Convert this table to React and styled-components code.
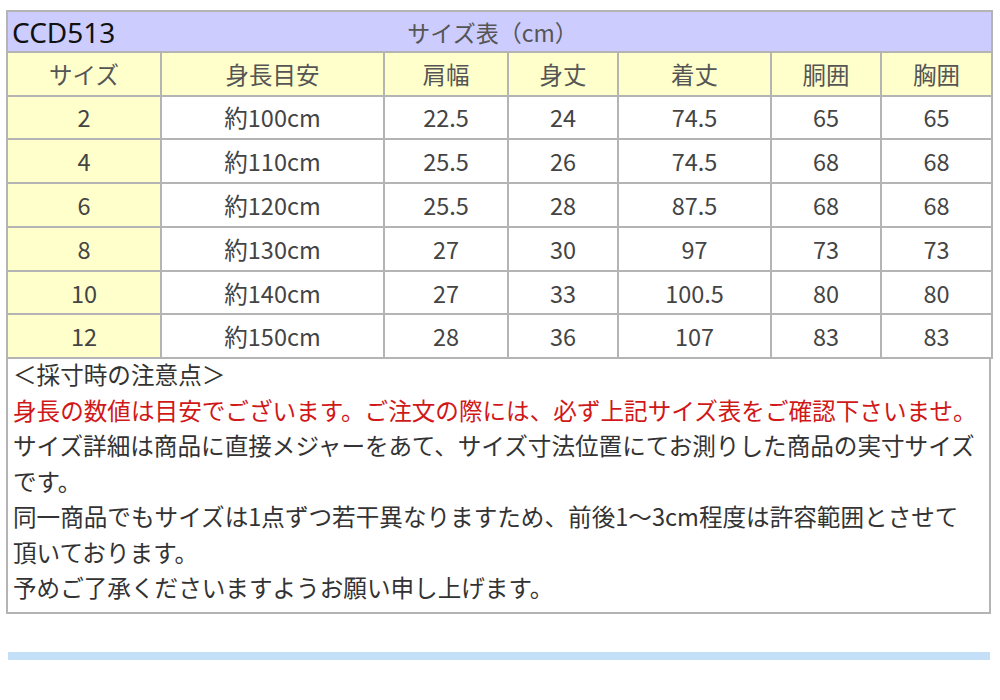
import React from 'react';
import styled, { createGlobalStyle } from 'styled-components';

const GlobalStyle = createGlobalStyle`
  body {
    margin: 0;
    background: #ffffff;
    font-family: 'Noto Sans CJK JP', 'Noto Sans', sans-serif;
  }
`;

const columns = [154, 223, 124, 110, 153, 110, 111];
const headers = ['サイズ', '身長目安', '肩幅', '身丈', '着丈', '胴囲', '胸囲'];
const rows = [
  ['2', '約100cm', '22.5', '24', '74.5', '65', '65'],
  ['4', '約110cm', '25.5', '26', '74.5', '68', '68'],
  ['6', '約120cm', '25.5', '28', '87.5', '68', '68'],
  ['8', '約130cm', '27', '30', '97', '73', '73'],
  ['10', '約140cm', '27', '33', '100.5', '80', '80'],
  ['12', '約150cm', '28', '36', '107', '83', '83'],
];

function App() {
  return (
    <Page>
      <GlobalStyle />
      <SizeTable>
        <colgroup>
          {columns.map((w, i) => <col key={i} style={{ width: w }} />)}
        </colgroup>
        <thead>
          <tr>
            <TitleCell colSpan={7}>
              <TitleBar>
                <Code>CCD513</Code>
                <Caption>サイズ表（cm）</Caption>
                <span />
              </TitleBar>
            </TitleCell>
          </tr>
          <tr>
            {headers.map((h) => <Head key={h}>{h}</Head>)}
          </tr>
        </thead>
        <tbody>
          {rows.map((r) => (
            <tr key={r[0]}>
              {r.map((v, i) => <Cell key={i} $first={i === 0}>{v}</Cell>)}
            </tr>
          ))}
        </tbody>
      </SizeTable>
      <Notes>
        <Line>＜採寸時の注意点＞</Line>
        <Line $red>身長の数値は目安でございます。ご注文の際には、必ず上記サイズ表をご確認下さいませ。</Line>
        <Line>サイズ詳細は商品に直接メジャーをあて、サイズ寸法位置にてお測りした商品の実寸サイズ</Line>
        <Line>です。</Line>
        <Line>同一商品でもサイズは1点ずつ若干異なりますため、前後1～3cm程度は許容範囲とさせて</Line>
        <Line>頂いております。</Line>
        <Line>予めご了承くださいますようお願い申し上げます。</Line>
      </Notes>
      <NextBar />
    </Page>
  );
}

export default App;

const Page = styled.div`
  padding: 10px 0 0 6px;
  width: 985px;
`;

const SizeTable = styled.table`
  width: 985px;
  table-layout: fixed;
  border-collapse: collapse;
  color: #444;
  font-size: 23.5px;
`;

const TitleCell = styled.th`
  background: #ccccff;
  border: 2px solid #b4b4b4;
  height: 39px;
  padding: 0 4px;
  font-weight: normal;
`;

const TitleBar = styled.div`
  display: grid;
  grid-template-columns: 1fr auto 1fr;
  align-items: center;
`;

const Code = styled.span`
  text-align: left;
  font-size: 28px;
  color: #111;
  font-family: 'Noto Sans', 'Noto Sans CJK JP', sans-serif;
  line-height: 38px;
`;

const Caption = styled.span`
  font-size: 23px;
  color: #555;
  line-height: 38px;
  margin-right: 14px;
`;

const Head = styled.th`
  background: #ffffcc;
  border: 2px solid #b4b4b4;
  height: 41.5px;
  padding: 0;
  font-weight: normal;
  text-align: center;
  color: #555;
`;

const Cell = styled.td`
  background: ${(p) => (p.$first ? '#ffffcc' : '#ffffff')};
  border: 2px solid #b4b4b4;
  height: 41.8px;
  padding: 0;
  text-align: center;
`;

const Notes = styled.div`
  border: 2px solid #b4b4b4;
  border-top: none;
  margin-top: -2px;
  padding: 0 6px 6px 5px;
  font-size: 23.6px;
  color: #333;
`;

const Line = styled.div`
  line-height: 35.5px;
  white-space: nowrap;
  color: ${(p) => (p.$red ? '#d01818' : '#333')};
`;

const NextBar = styled.div`
  margin: 38px 0 0 2px;
  height: 8px;
  width: 982px;
  background: #c4e0f8;
`;
